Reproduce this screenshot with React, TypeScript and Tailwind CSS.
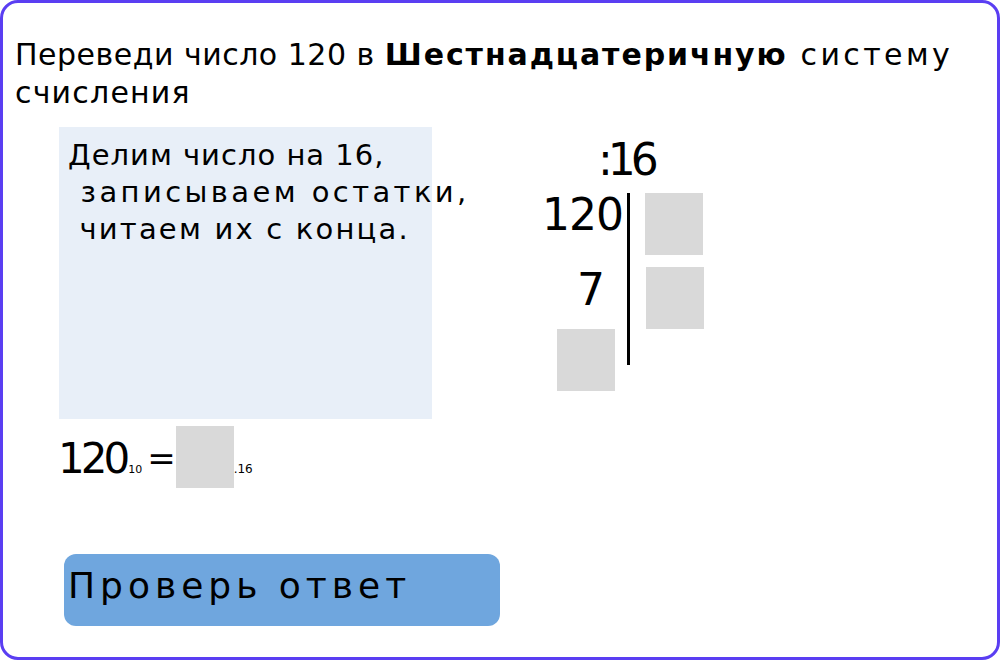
import React from "react";

export default function App() {
  return (
    <div
      className="w-[1000px] h-[660px] bg-white text-black"
      style={{ fontFamily: '"DejaVu Sans", "Noto Sans", sans-serif' }}
    >
      <div className="w-full h-full border-[3px] border-[#5a3ef2] rounded-[18px] flex flex-col">
        <div className="pl-[12px] pt-[33px] text-[30px] leading-[38px] font-normal whitespace-pre">
          <span className="tracking-[0.5px]">{"Переведи число 120 в "}</span>
          <span className="font-bold tracking-[1.9px]">Шестнадцатеричную</span>
          <span className="tracking-[3.4px]">{" систему"}</span>
          <br />
          <span className="tracking-[1.2px]">счисления</span>
        </div>

        <div className="flex items-start mt-[15px] ml-[56px]">
          <div className="flex flex-col w-[373px]">
            <div className="w-[373px] h-[292px] bg-[#e8eff8] pl-[9px] pt-[10px] text-[29px] leading-[37px] whitespace-pre">
              <div className="tracking-[1px]">Делим число на 16,</div>
              <div className="tracking-[3.4px]">{" записываем остатки,"}</div>
              <div className="tracking-[2.2px]">{" читаем их с конца."}</div>
            </div>
            <div className="mt-[7px] -ml-[1px] h-[66px] text-[42px] leading-[66px] whitespace-nowrap">
              <span className="tracking-[-4px]">120</span>
              <span className="text-[11px] leading-none ml-[2px]">10</span>
              <span className="text-[34px] leading-none ml-[5px] align-[3px]">=</span>
              <span className="inline-block align-top w-[58px] h-[62px] bg-[#d9d9d9]"></span>
              <span className="text-[12px] leading-none">.16</span>
            </div>
          </div>

          <div className="ml-[108px] flex flex-col">
            <div className="mt-[11px] ml-[58px] text-[44px] leading-[44px] tracking-[-5px]">:16</div>
            <div className="mt-[11px] flex items-start">
              <div className="w-[87px] flex flex-col items-end">
                <div className="pr-[4px] text-[44px] leading-[44px] tracking-[-1px]">120</div>
                <div className="mt-[31px] pr-[22px] text-[44px] leading-[44px]">7</div>
                <div className="mt-[17px] mr-[12px] w-[58px] h-[62px] bg-[#d9d9d9]"></div>
              </div>
              <div className="w-[3px] h-[172px] bg-black"></div>
              <div className="ml-[15px] flex flex-col">
                <div className="w-[58px] h-[62px] bg-[#d9d9d9]"></div>
                <div className="mt-[12px] ml-[1px] w-[58px] h-[62px] bg-[#d9d9d9]"></div>
              </div>
            </div>
          </div>
        </div>

        <div className="mt-[62px] ml-[61px] w-[436px] h-[72px] rounded-[12px] bg-[#6fa6de] pl-[4px] pt-[7px] text-[36px] leading-[49px] tracking-[5px] whitespace-nowrap">
          Проверь ответ
        </div>
      </div>
    </div>
  );
}
